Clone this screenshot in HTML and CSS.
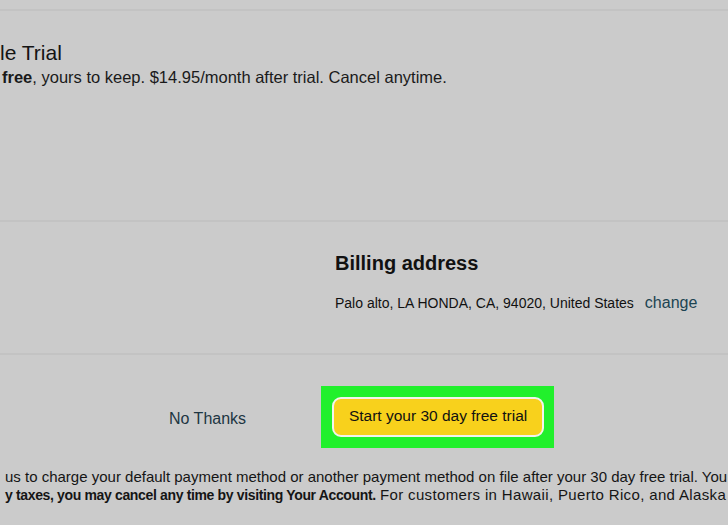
FILE: index.html
```html
<!DOCTYPE html>
<html lang="en">
<head>
  <meta charset="UTF-8" />
  <meta name="viewport" content="width=device-width, initial-scale=1.0"/>
  <title>Start your free trial</title>
  <link rel="stylesheet" href="styles.css">
</head>

<body>
  <div class="page">
    <div class="top-strip"></div>

    <section class="plan">
      <h2 class="plan-title">le Trial</h2>
      <p class="plan-desc"><strong>free</strong>, yours to keep. $14.95/month after trial. Cancel anytime.</p>
    </section>

    <section class="billing">
      <h3>Billing address</h3>
      <div class="address-row">
        <span class="address">Palo alto, LA HONDA, CA, 94020, United States</span>
        <a href="#" class="change-link">change</a>
      </div>
    </section>

    <section class="actions">
      <div class="action-row">
        <a href="#" class="no-thanks">No Thanks</a>
        <div class="highlight">
          <a href="#" class="btn-trial">Start your 30 day free trial</a>
        </div>
      </div>

      <div class="terms">
        <p>us to charge your default payment method or another payment method on file after your 30 day free trial. You</p>
        <p><strong>y taxes, you may cancel any time by visiting Your Account.</strong> <span class="wide">For customers in Hawaii, Puerto Rico, and Alaska</span></p>
      </div>
    </section>
  </div>
</body>
</html>
```

FILE: styles.css
```css
* {
  box-sizing: border-box;
}

body {
  font-family: "Liberation Sans", Arial, sans-serif;
  margin: 0;
  background-color: #cbcbcb;
  color: #111;
}

.page {
  width: 728px;
  height: 525px;
  overflow: hidden;
}

.top-strip {
  height: 11px;
  border-bottom: 2px solid #c3c3c3;
}

.plan {
  height: 211px;
  padding-top: 30px;
  border-bottom: 2px solid #c3c3c3;
}

.plan-title {
  margin: 0;
  font-size: 21px;
  line-height: 24px;
  font-weight: normal;
  color: #141414;
}

.plan-desc {
  margin: 2px 0 0 2px;
  font-size: 16.5px;
  line-height: 20px;
  color: #1a1a1a;
}

.billing {
  height: 133px;
  padding: 30px 0 0 335px;
  border-bottom: 2px solid #c3c3c3;
}

.billing h3 {
  margin: 0;
  font-size: 20px;
  line-height: 22px;
  color: #111;
}

.address-row {
  margin-top: 20px;
  display: flex;
  align-items: baseline;
  gap: 11px;
  white-space: nowrap;
}

.address {
  font-size: 14px;
  line-height: 16px;
}

.change-link {
  font-size: 16px;
  color: #1c4452;
  text-decoration: none;
}

.action-row {
  display: flex;
  align-items: center;
  gap: 75px;
  padding: 31px 0 0 169px;
}

.no-thanks {
  font-size: 16px;
  color: #1d3642;
  text-decoration: none;
  margin-top: 4px;
}

.highlight {
  background-color: #21f02c;
  padding: 11px 10px 11px 11px;
}

.btn-trial {
  display: block;
  width: 212px;
  height: 40px;
  border: 2px solid #f3f3ee;
  border-radius: 9px;
  background-color: #f8d11c;
  color: #111;
  font-size: 15.5px;
  line-height: 34px;
  text-align: center;
  text-decoration: none;
}

.terms {
  margin-top: 20px;
  padding-left: 5px;
  white-space: nowrap;
}

.terms p {
  margin: 0;
  font-size: 15px;
  line-height: 18px;
  color: #151515;
}

.terms strong {
  font-size: 14px;
  letter-spacing: -0.35px;
}

.terms .wide {
  letter-spacing: 0.35px;
}
```
